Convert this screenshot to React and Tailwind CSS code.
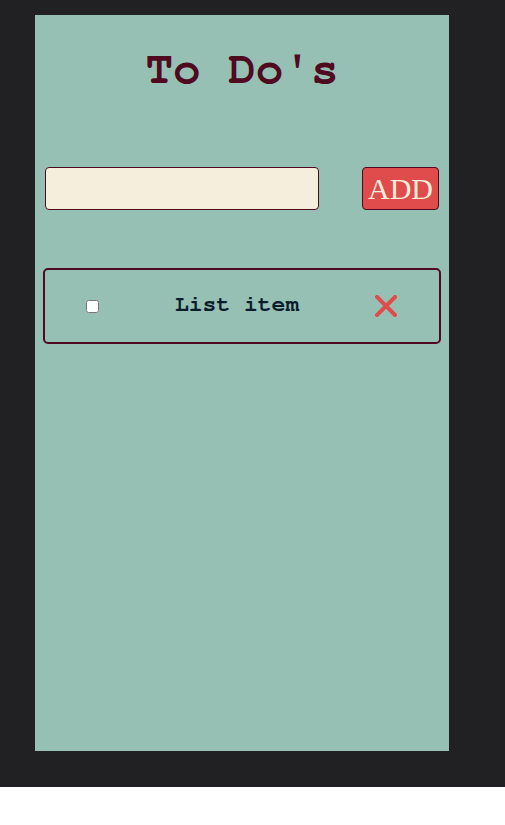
const mono = '"Nimbus Mono PS", "Nimbus Mono L", FreeMono, "Courier New", Courier, "Liberation Mono", monospace';

export default function App() {
  return (
    <div className="w-[505px] h-[787px] bg-[#212123] pt-[15px] pl-[35px]">
      <div className="w-[414px] h-[736px] bg-[#97c0b5] flex flex-col">
        <h1
          className="mt-[30px] h-[48px] flex items-center justify-center text-[46px] leading-none font-bold text-[#4f0a1f]"
          style={{ fontFamily: mono }}
        >
          To Do's
        </h1>
        <div className="mt-[74px] px-[10px] flex justify-between items-center">
          <input
            type="text"
            className="w-[274px] h-[43px] bg-[#f5eedc] border border-[#4f0a1f] rounded-[4px] outline-none px-2"
          />
          <button
            className="w-[77px] h-[43px] bg-[#e04b4b] border border-[#4f0a1f] rounded-[4px] text-[#f5eedc] text-[30px] leading-none font-light flex items-center justify-center"
            style={{ fontFamily: '"Nimbus Roman", "Liberation Serif", "Times New Roman", serif' }}
          >
            ADD
          </button>
        </div>
        <div className="mt-[58px] mx-[8px] h-[76px] border-2 border-[#4f0a1f] rounded-[5px] flex items-center">
          <input type="checkbox" className="ml-[41px] w-[13px] h-[13px] m-0" />
          <span
            className="ml-[76px] pb-[3px] text-[23px] leading-none font-bold text-[#0b1d2c]"
            style={{ fontFamily: mono }}
          >
            List item
          </span>
          <svg
            className="ml-auto mr-[42px]"
            width="22"
            height="22"
            viewBox="0 0 22 22"
          >
            <path d="M2 2 L20 20 M20 2 L2 20" stroke="#e04b4b" strokeWidth="4" strokeLinecap="square" />
          </svg>
        </div>
      </div>
    </div>
  );
}
